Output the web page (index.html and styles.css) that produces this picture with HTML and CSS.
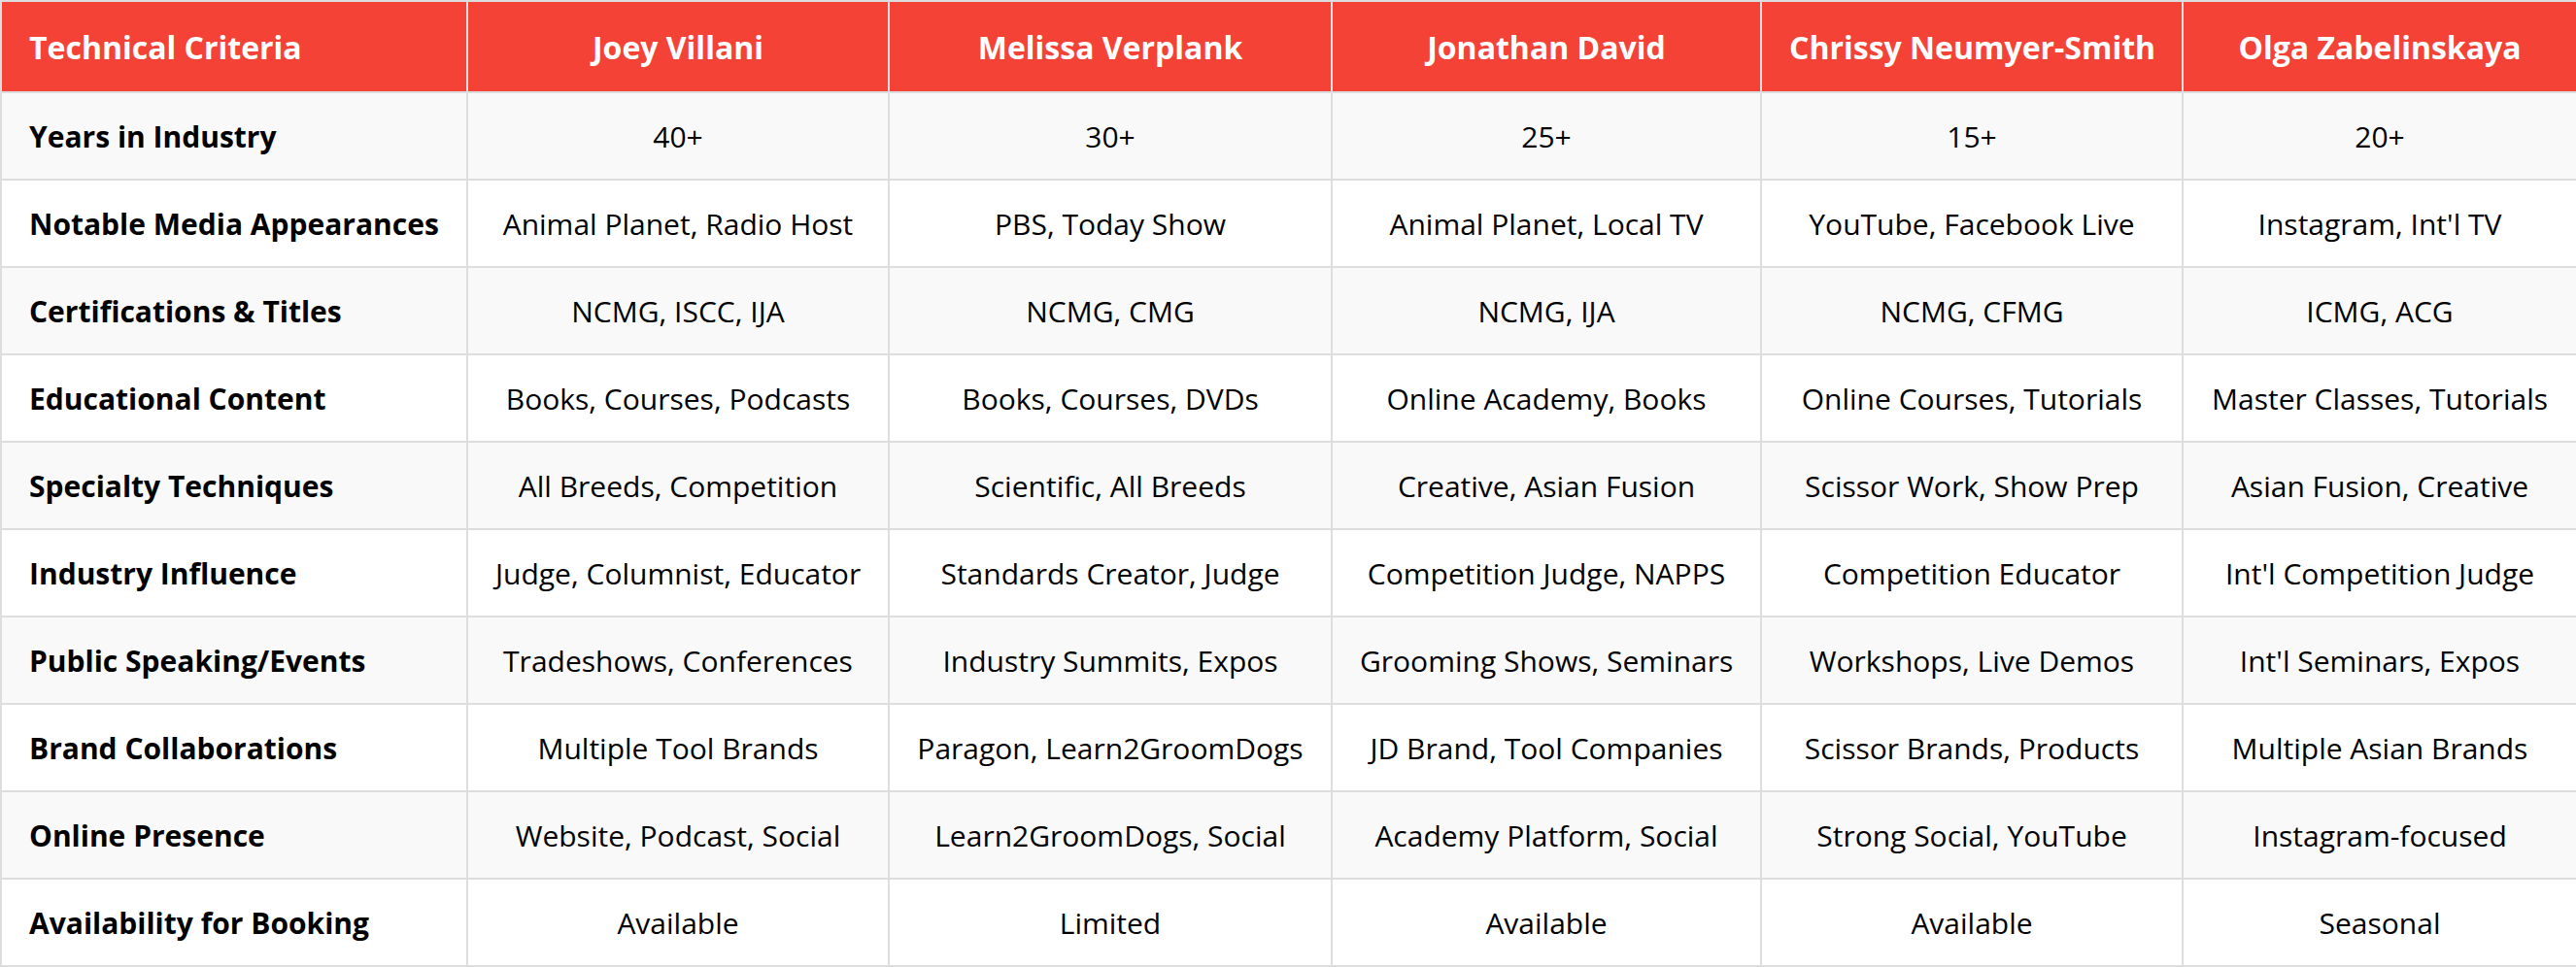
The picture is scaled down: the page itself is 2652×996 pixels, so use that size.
FILE: index.html
```html
<!DOCTYPE html>
<html>
<head>
<meta charset="utf-8">
<link rel="stylesheet" href="styles.css">
</head>
<body>
<table class="compare">
  <colgroup>
    <col class="c1"><col class="c2"><col class="c3"><col class="c4"><col class="c5"><col class="c6">
  </colgroup>
  <thead>
    <tr>
      <th class="lead">Technical Criteria</th>
      <th>Joey Villani</th>
      <th>Melissa Verplank</th>
      <th>Jonathan David</th>
      <th>Chrissy Neumyer-Smith</th>
      <th>Olga Zabelinskaya</th>
    </tr>
  </thead>
  <tbody>
    <tr><td class="lead">Years in Industry</td><td>40+</td><td>30+</td><td>25+</td><td>15+</td><td>20+</td></tr>
    <tr><td class="lead">Notable Media Appearances</td><td>Animal Planet, Radio Host</td><td>PBS, Today Show</td><td>Animal Planet, Local TV</td><td>YouTube, Facebook Live</td><td>Instagram, Int'l TV</td></tr>
    <tr><td class="lead">Certifications &amp; Titles</td><td>NCMG, ISCC, IJA</td><td>NCMG, CMG</td><td>NCMG, IJA</td><td>NCMG, CFMG</td><td>ICMG, ACG</td></tr>
    <tr><td class="lead">Educational Content</td><td>Books, Courses, Podcasts</td><td>Books, Courses, DVDs</td><td>Online Academy, Books</td><td>Online Courses, Tutorials</td><td>Master Classes, Tutorials</td></tr>
    <tr><td class="lead">Specialty Techniques</td><td>All Breeds, Competition</td><td>Scientific, All Breeds</td><td>Creative, Asian Fusion</td><td>Scissor Work, Show Prep</td><td>Asian Fusion, Creative</td></tr>
    <tr><td class="lead">Industry Influence</td><td>Judge, Columnist, Educator</td><td>Standards Creator, Judge</td><td>Competition Judge, NAPPS</td><td>Competition Educator</td><td>Int'l Competition Judge</td></tr>
    <tr><td class="lead">Public Speaking/Events</td><td>Tradeshows, Conferences</td><td>Industry Summits, Expos</td><td>Grooming Shows, Seminars</td><td>Workshops, Live Demos</td><td>Int'l Seminars, Expos</td></tr>
    <tr><td class="lead">Brand Collaborations</td><td>Multiple Tool Brands</td><td>Paragon, Learn2GroomDogs</td><td>JD Brand, Tool Companies</td><td>Scissor Brands, Products</td><td>Multiple Asian Brands</td></tr>
    <tr><td class="lead">Online Presence</td><td>Website, Podcast, Social</td><td>Learn2GroomDogs, Social</td><td>Academy Platform, Social</td><td>Strong Social, YouTube</td><td>Instagram-focused</td></tr>
    <tr><td class="lead">Availability for Booking</td><td>Available</td><td>Limited</td><td>Available</td><td>Available</td><td>Seasonal</td></tr>
  </tbody>
</table>
</body>
</html>
```
FILE: styles.css
```css
html, body {
  margin: 0;
  padding: 0;
  background: #ffffff;
}
body {
  font-family: "Open Sans", "Noto Sans", sans-serif;
  color: #000;
}
.compare {
  width: 2652px;
  border-collapse: collapse;
  table-layout: fixed;
  font-size: 30px;
  line-height: 45px;
}
.c1 { width: 480px; }
.c2 { width: 434px; }
.c3 { width: 456px; }
.c4 { width: 442px; }
.c5 { width: 434px; }
.c6 { width: 406px; }
.compare th,
.compare td {
  border: 2px solid #dddddd;
  text-align: center;
  white-space: nowrap;
}
.compare th {
  background: #f44336;
  color: #ffffff;
  font-weight: 700;
  font-size: 32px;
  height: 92px;
  padding: 0 28px;
}
.compare td {
  padding: 0 28px;
  height: 88px;
}
.compare .lead {
  text-align: left;
}
.compare td.lead {
  font-weight: 700;
}
.compare tbody tr:nth-child(odd) td {
  background: #f9f9f9;
}
.compare tbody tr:nth-child(even) td {
  background: #ffffff;
}
```
